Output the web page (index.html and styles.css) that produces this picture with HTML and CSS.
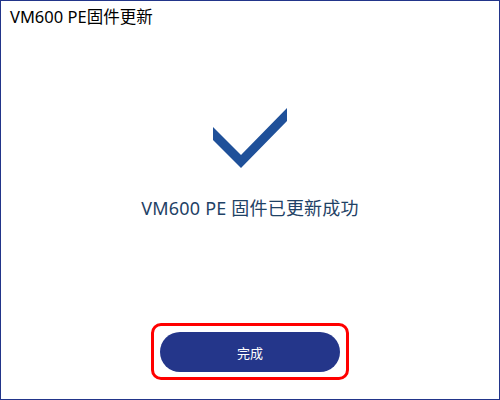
FILE: index.html
```html
<!DOCTYPE html>
<html lang="zh-CN">
<head>
<meta charset="UTF-8" />
<title>VM600 PE固件更新</title>
<link rel="stylesheet" href="styles.css">
</head>
<body>
  <div class="dialog">
    <div class="dialog-title">VM600 PE固件更新</div>

    <div class="result">
      <svg class="check-icon" width="76" height="62" viewBox="0 0 76 62">
        <polygon points="1,21 29,49 75,2 75,15 29,62 1,34" fill="#1f5099" />
      </svg>
      <p class="result-text">VM600 PE 固件已更新成功</p>
    </div>

    <div class="actions">
      <button class="done-btn" type="button">完成</button>
    </div>
  </div>
</body>
</html>
```

FILE: styles.css
```css
  body {
    margin: 0;
    font-family: 'Noto Sans', 'Noto Sans CJK SC', sans-serif;
    background-color: #fff;
  }

  .dialog {
    box-sizing: border-box;
    width: 500px;
    height: 400px;
    border: 1px solid #22358a;
    display: flex;
    flex-direction: column;
    align-items: center;
  }

  .dialog-title {
    align-self: stretch;
    padding: 5px 0 0 9px;
    font-size: 16.5px;
    line-height: 22px;
    color: #000;
  }

  .result {
    display: flex;
    flex-direction: column;
    align-items: center;
  }

  .check-icon {
    display: block;
    margin-top: 78px;
  }

  .result-text {
    margin: 28px 0 0;
    font-size: 18px;
    line-height: 24px;
    letter-spacing: 0.2px;
    color: #1f4266;
  }

  /* 完成ボタンの枠 */
  .actions {
    margin-top: auto;
    margin-bottom: 19px;
    padding: 6px 6px 5px;
    border: 3px solid #f00;
    border-radius: 10px;
  }

  .done-btn {
    display: block;
    width: 180px;
    height: 40px;
    border: none;
    border-radius: 20px;
    background-color: #24368a;
    color: #fff;
    font-family: 'Noto Sans', 'Noto Sans CJK SC', sans-serif;
    font-size: 13px;
    cursor: pointer;
  }
```
